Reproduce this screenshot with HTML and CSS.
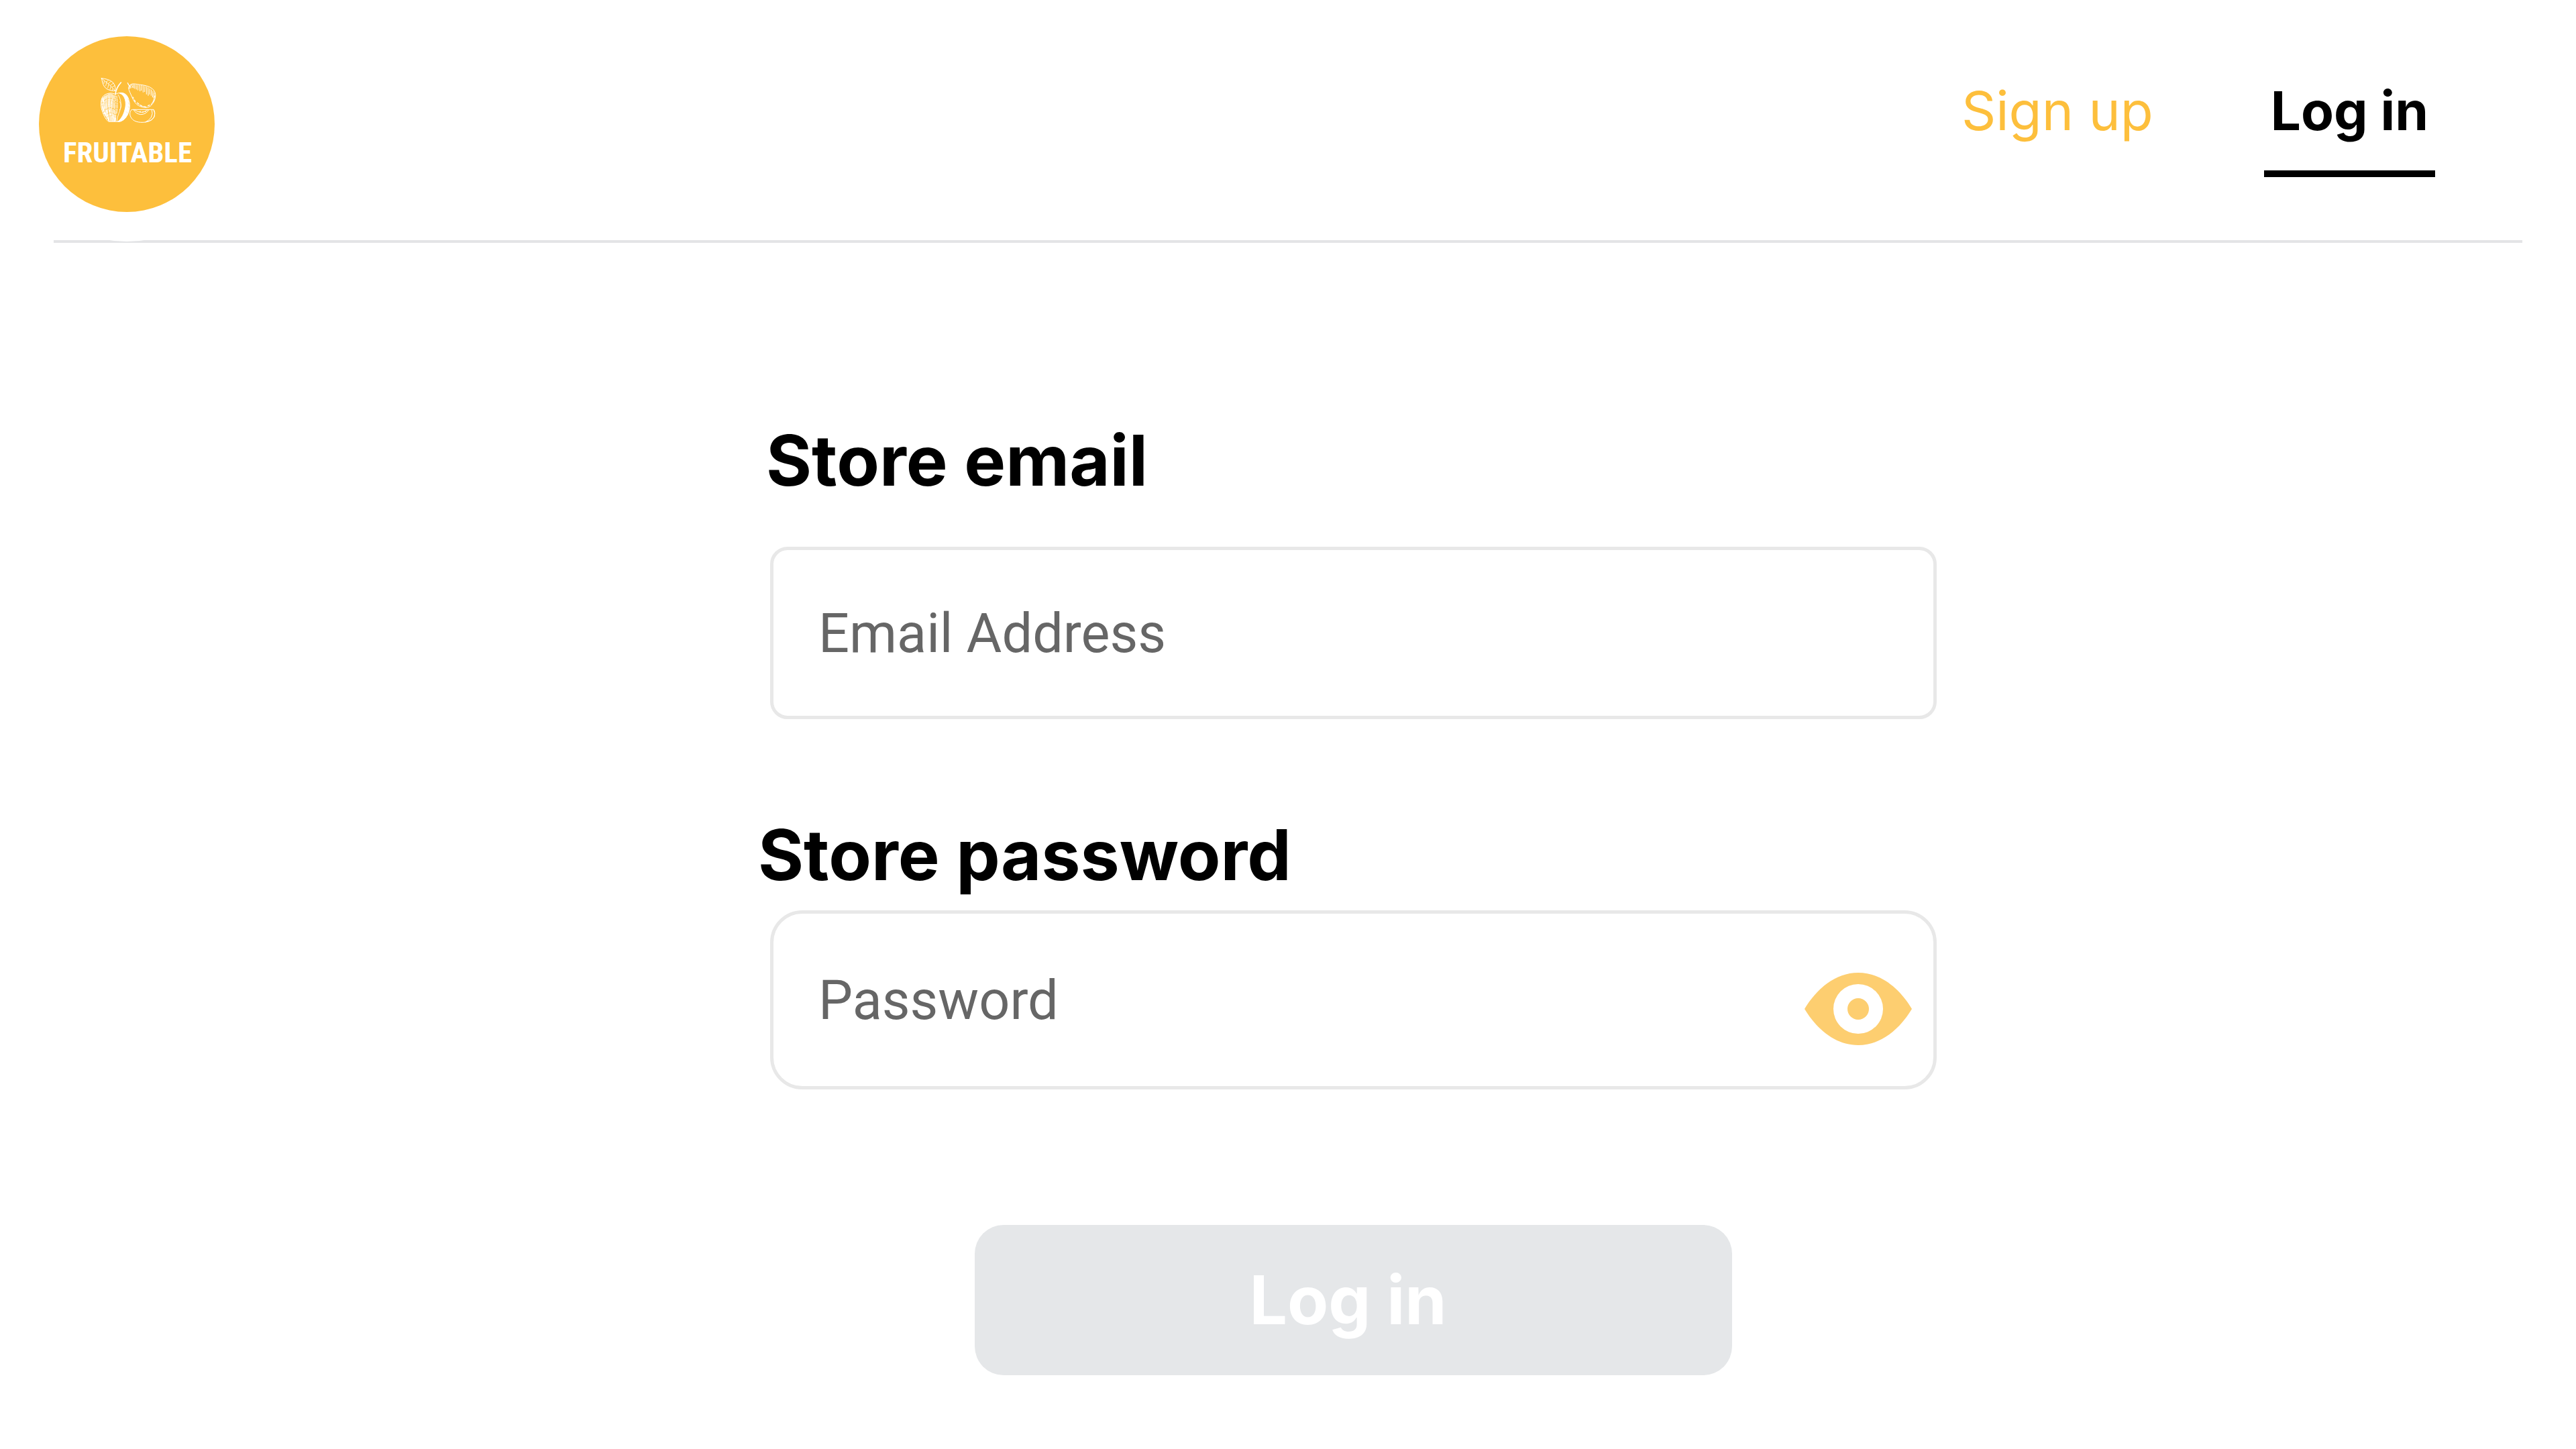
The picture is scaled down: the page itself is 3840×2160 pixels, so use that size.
FILE: index.html
```html
<!DOCTYPE html>
<html lang="en">
<head>
<meta charset="utf-8">
<meta name="viewport" content="width=device-width, initial-scale=1">
<title>Fruitable – Log in</title>
<link rel="stylesheet" href="styles.css">
</head>
<body>
<header class="header">
  <a class="logo" href="#" aria-label="Fruitable home">
    <svg class="logo-art" viewBox="0 0 262 262" aria-hidden="true">
      <g transform="translate(72 36) scale(.3333)" fill="none" stroke="#fff" stroke-width="3" stroke-linecap="round" stroke-linejoin="round">
        <!-- leaf and stalk -->
        <path d="M64 80C80 82 102 86 114 98C125 110 127 122 125 136C109 137 88 132 78 119C68 106 68 92 64 80Z"/>
        <path d="M66 82Q100 106 126 137M84 96L94 90M94 104L106 94M104 112L117 102M112 120L123 113M76 92L75 103M86 100L83 114M96 108L92 123M106 117L102 130M115 126L112 134" stroke-width="2.5"/>
        <path d="M126 150Q130 122 151 99" stroke-width="5"/>
        <!-- whole apple with its cut side -->
        <path d="M126 152C110 142 82 146 69 163C58 180 60 210 69 232C76 251 84 266 96 274H134C158 277 178 256 187 226C194 200 188 166 172 152C158 141 139 144 126 152Z"/>
        <path d="M145 147C170 154 178 190 168 222C161 249 148 266 136 274C160 276 181 252 187 222C193 190 184 151 160 147Z" fill="#fff"/>
        <path d="M138 154C154 175 154 210 142 235Q134 255 132 274M146 185Q158 205 145 222" stroke-width="2.5"/>
        <path d="M67 171Q62 206 76 239M72 167Q67 211 83 252M78 160Q72 209 88 260M84 157Q78 210 95 268M90 154Q83 207 99 271M96 151Q91 204 105 271M102 150Q98 209 111 271M108 151Q105 207 116 271M114 153Q113 212 121 271M120 157Q121 214 125 272" stroke-width="4" stroke-dasharray="17 5 8 4 25 6"/>
        <path d="M75 164Q70 188 82 222M88 163Q91 210 86 245M100 163Q94 220 108 254M113 171Q102 210 117 259M126 158Q131 215 127 270M132 160Q138 204 132 236" stroke-width="3" stroke-dasharray="7 4 13 5"/>
        <path d="M182 173L190 182M184 189L190 198M183 207L189 212M175 230L182 237" stroke="#fdbf3c" stroke-width="1"/>
        <!-- pear -->
        <path d="M181 101Q184 110 192 118" stroke-width="4"/>
        <path d="M192 110C202 100 220 107 238 109C270 112 302 124 305 151C307 171 298 191 282 205C266 216 240 211 222 197C207 185 202 166 191 143C184 128 184 120 192 118Z"/>
        <path d="M184 120L194 114M185 125L197 122M197 108L203 121M205 107L207 123M212 108L213 126M219 110L220 129M227 111L227 133M235 111L236 137M243 112L242 134M250 114L250 142M258 116L257 140M265 119L265 151M272 122L273 157M280 127L279 151M287 132L286 157M294 138L292 164M300 145L297 167M303 158L294 188M299 179L286 197" stroke-width="3"/>
        <path d="M204 165L207 169M211 177L215 184M224 190L231 196M237 200L246 205M252 206L263 208M272 203L279 200" stroke-width="4"/>
        <!-- apple slice -->
        <path d="M204 220H297C306 231 304 254 287 267C268 279 231 281 211 270C193 260 184 236 197 222Z"/>
        <path d="M207 220Q216 239 239 242Q263 242 275 222M211 221Q244 244 271 221M289 222Q295 239 286 255Q275 270 260 276Q291 270 301 251Q305 235 297 221" />
        <path d="M237 229V230M249 231V232M260 228V229" stroke-width="5"/>
      </g>
      <text class="logo-name" x="132" y="188" text-anchor="middle">FRUITABLE</text>
    </svg>
  </a>
  <nav class="nav">
    <a class="nav-link" href="#">Sign up</a>
    <a class="nav-link nav-link-active" href="#" aria-current="page">Log in</a>
  </nav>
</header>
<hr class="divider">
<main class="main">
  <form class="form">
    <label class="label label-email" for="email">Store email</label>
    <div class="field field-email">
      <input class="input" id="email" type="email" placeholder="Email Address">
    </div>
    <label class="label" for="password">Store password</label>
    <div class="field field-password">
      <input class="input" id="password" type="password" placeholder="Password">
      <button class="reveal" type="button" aria-label="Show password">
        <svg class="eye" viewBox="0 0 160 108" aria-hidden="true">
          <path fill="#fdce70" fill-rule="evenodd" d="M0 54C18 24 46 0 80 0S142 24 160 54C142 84 114 108 80 108S18 84 0 54ZM80 17A37 37 0 1 0 80 91A37 37 0 1 0 80 17ZM80 38A16 16 0 1 1 80 70A16 16 0 1 1 80 38Z"/>
        </svg>
      </button>
    </div>
    <button class="submit" type="submit">Log in</button>
  </form>
</main>
</body>
</html>
```
FILE: styles.css
```css
* {
  box-sizing: border-box;
}

body {
  margin: 0;
  background: #fff;
  color: #000;
  font-family: Inter, "Liberation Sans", sans-serif;
}

.header {
  display: flex;
  justify-content: space-between;
  align-items: flex-start;
  padding: 54px 210px 42px 58px;
}

/* The white ring keeps the divider clear of the badge. */
.logo {
  position: relative;
  width: 262px;
  height: 262px;
  border-radius: 50%;
  background: #fdbf3c;
  box-shadow: 0 0 0 44px #fff;
}

.logo-art {
  display: block;
  width: 100%;
  height: 100%;
}

.logo-name {
  fill: #fff;
  font-family: "Roboto Condensed", "Liberation Sans Narrow", "Liberation Sans", sans-serif;
  font-size: 43px;
  font-weight: 700;
}

.nav {
  display: flex;
  gap: 155px;
  padding-top: 63px;
}

.nav-link {
  padding: 0 10px 41px;
  border-bottom: 10px solid transparent;
  color: #fdbf3c;
  font-size: 80px;
  line-height: 96px;
  text-decoration: none;
}

.nav-link-active {
  border-bottom-color: #000;
  color: #000;
  font-weight: 700;
}

.divider {
  height: 4px;
  margin: 0 80px;
  border: 0;
  background: #e3e4e6;
}

.main {
  display: grid;
  grid-template-columns: 1130fr 1757fr 953fr;
  padding: 261px 0 110px;
}

.form {
  grid-column: 2;
  display: flex;
  flex-direction: column;
}

.label {
  font-size: 104px;
  font-weight: 700;
  line-height: 126px;
}

.label-email {
  padding-left: 12px;
}

.field {
  display: flex;
  align-items: center;
  margin-left: 18px;
  border: 5px solid #e8e8e8;
  background: #fff;
}

.field-email {
  height: 257px;
  margin-top: 66px;
  margin-bottom: 139px;
  border-radius: 26px;
}

.field-password {
  height: 267px;
  margin-top: 20px;
  border-radius: 48px;
}

.input {
  flex: 1;
  min-width: 0;
  height: 100%;
  padding: 2px 67px 0;
  border: 0;
  border-radius: inherit;
  outline: 0;
  background: transparent;
  color: #000;
  font-family: Roboto, "Liberation Sans", sans-serif;
  font-size: 81px;
}

.input::placeholder {
  color: #666;
  opacity: 1;
}

.reveal {
  padding: 26px 32px 0 0;
  border: 0;
  background: none;
}

.eye {
  display: block;
  width: 160px;
  height: 108px;
}

.submit {
  align-self: center;
  width: 100%;
  max-width: 1129px;
  height: 224px;
  margin-top: 202px;
  margin-left: 18px;
  padding: 0 16px 0 0;
  border: 0;
  border-radius: 43px;
  background: #e5e7e9;
  color: #fff;
  font-family: inherit;
  font-size: 100px;
  font-weight: 700;
  line-height: 120px;
}
```
